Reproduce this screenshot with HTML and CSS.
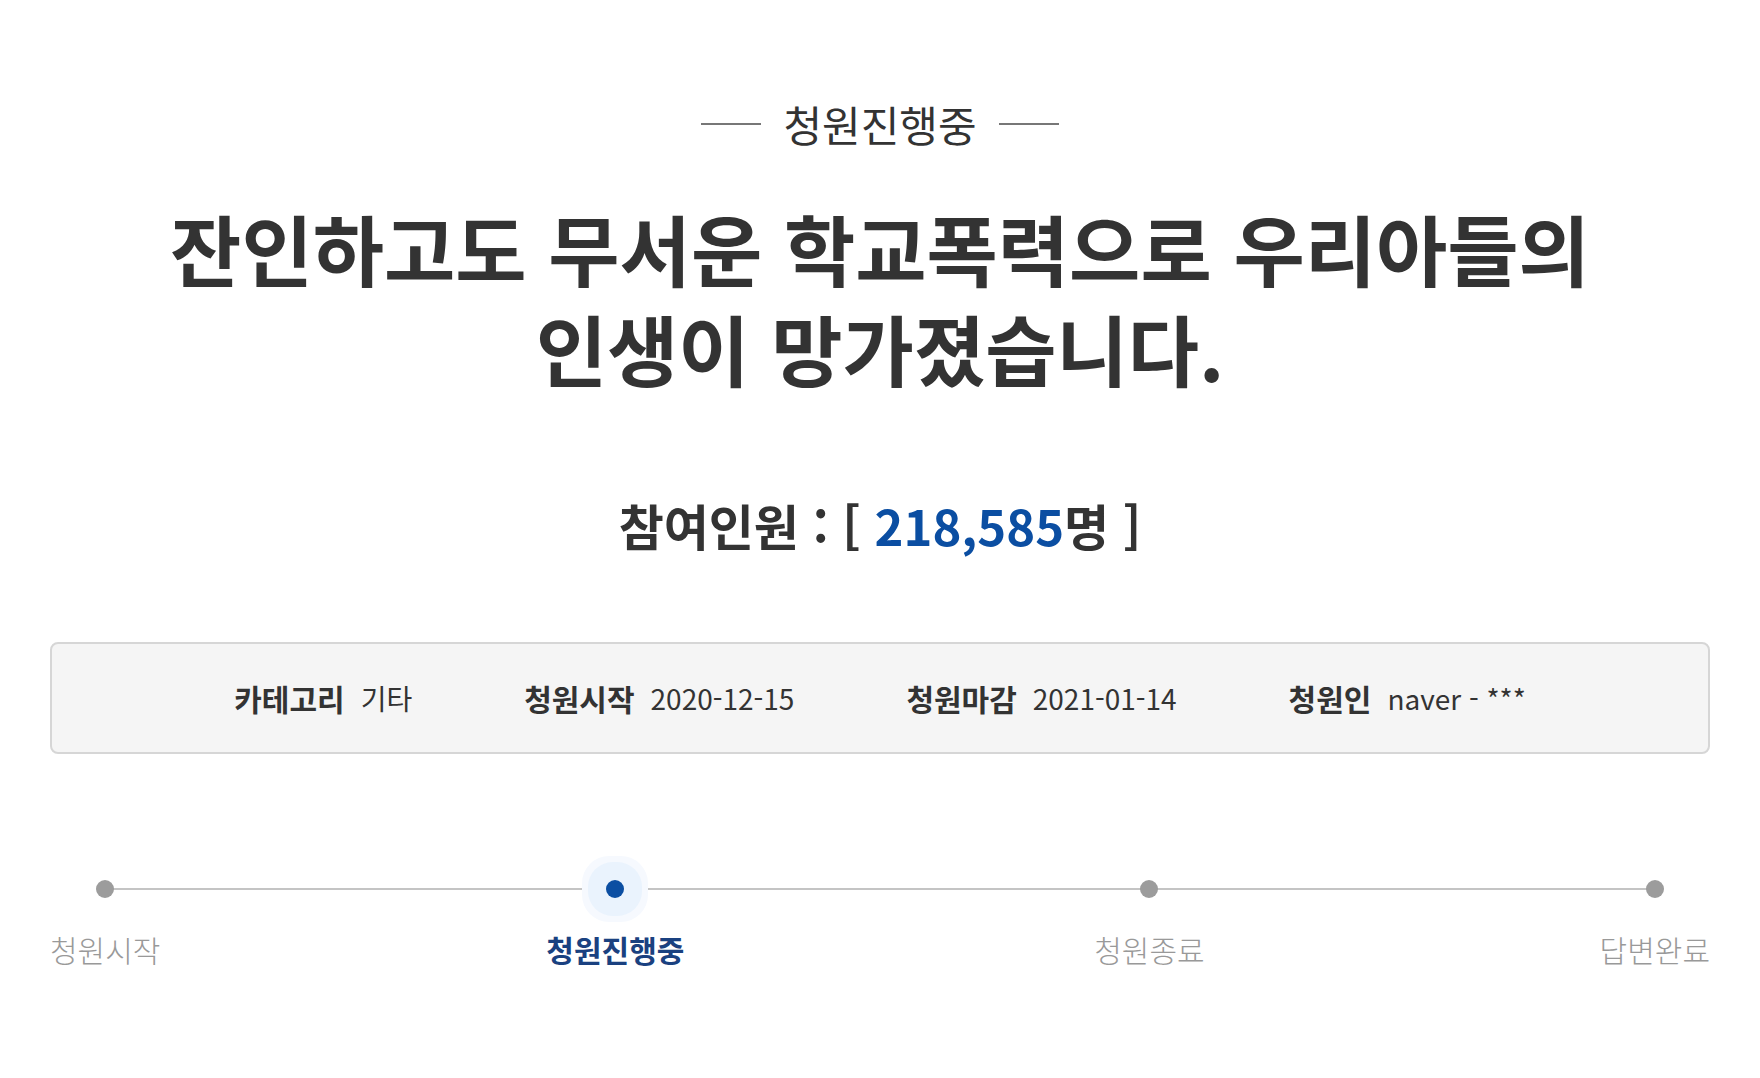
FILE: index.html
```html
<!DOCTYPE html>
<html lang="ko">
<head>
<meta charset="utf-8">
<title>청원진행중</title>
<link rel="stylesheet" href="styles.css">
</head>
<body>
<div class="wrap">
  <div class="status">
    <span class="status-line"></span>
    <span class="status-text">청원진행중</span>
    <span class="status-line"></span>
  </div>
  <h1 class="title"><span class="title-line">잔인하고도 무서운 학교폭력으로 우리아들의</span><span class="title-line">인생이 망가졌습니다.</span></h1>
  <h2 class="count">참여인원 : [ <span class="count-num">218,585</span>명 ]</h2>
  <ul class="info">
    <li class="info-item"><strong class="info-label">카테고리</strong><span class="info-value">기타</span></li>
    <li class="info-item"><strong class="info-label">청원시작</strong><span class="info-value">2020-12-15</span></li>
    <li class="info-item"><strong class="info-label">청원마감</strong><span class="info-value">2021-01-14</span></li>
    <li class="info-item"><strong class="info-label">청원인</strong><span class="info-value">naver - ***</span></li>
  </ul>
  <div class="steps">
    <ul class="step-list">
      <li class="step"><span class="dot-area"><span class="dot"></span></span><span class="step-label">청원시작</span></li>
      <li class="step step-active"><span class="dot-area"><span class="dot"></span></span><span class="step-label">청원진행중</span></li>
      <li class="step step-end"><span class="dot-area"><span class="dot"></span></span><span class="step-label">청원종료</span></li>
      <li class="step"><span class="dot-area"><span class="dot"></span></span><span class="step-label">답변완료</span></li>
    </ul>
  </div>
</div>
</body>
</html>
```
FILE: styles.css
```css
* { box-sizing: border-box; }
html, body { margin: 0; padding: 0; background: #fff; }
body {
  font-family: "Noto Sans CJK KR", "Noto Sans KR", "Noto Sans", sans-serif;
  color: #333;
}
.wrap {
  width: 1660px;
  margin: 0 auto;
  padding-top: 96px;
}
.status {
  height: 56px;
  display: flex;
  align-items: center;
  justify-content: center;
  gap: 22px;
}
.status-line {
  display: block;
  width: 60px;
  height: 2px;
  background: #777;
}
.status-text {
  font-size: 42px;
  line-height: 56px;
  font-weight: 400;
  color: #333;
}
.title {
  margin: 45px 0 0;
  font-size: 77.5px;
  line-height: 100px;
  font-weight: 700;
  text-align: center;
  color: #333;
}
.title-line {
  display: block;
  height: 100px;
}
.count {
  margin: 98px 0 0;
  font-size: 49px;
  line-height: 60px;
  font-weight: 700;
  text-align: center;
  color: #333;
}
.count-num { color: #0b4ea2; }
.info {
  list-style: none;
  margin: 87px 0 0;
  padding: 0;
  height: 112px;
  border: 2px solid #d6d6d6;
  border-radius: 8px;
  background: #f5f5f5;
  display: flex;
  align-items: center;
  justify-content: center;
  gap: 112px;
  line-height: 40px;
}
.info-item { display: flex; align-items: center; gap: 16px; }
.info-label { font-size: 30px; font-weight: 700; color: #333; }
.info-value { font-size: 28px; font-weight: 400; color: #333; }
.steps {
  position: relative;
  margin-top: 102px;
}
.steps::before {
  content: "";
  position: absolute;
  left: 54px;
  right: 54px;
  top: 32px;
  height: 2px;
  background: #c4c4c4;
}
.step-list {
  list-style: none;
  margin: 0;
  padding: 0;
  display: flex;
  justify-content: space-between;
  position: relative;
}
.step {
  display: flex;
  flex-direction: column;
  align-items: center;
}
.step-active { margin-right: 24px; }
.step-end { margin-right: 9px; }
.dot-area {
  width: 66px;
  height: 66px;
  display: flex;
  align-items: center;
  justify-content: center;
}
.dot {
  display: block;
  width: 18px;
  height: 18px;
  border-radius: 50%;
  background: #9c9c9c;
}
.step-active .dot {
  background: #0b4ea2;
  box-shadow: 0 0 0 18px #eaf3fd, 0 0 0 24px #f6f9fe;
}
.step-label {
  margin-top: 7px;
  font-size: 30px;
  line-height: 40px;
  font-weight: 300;
  color: #999;
}
.step-active .step-label {
  font-weight: 700;
  color: #1a4180;
}
```
